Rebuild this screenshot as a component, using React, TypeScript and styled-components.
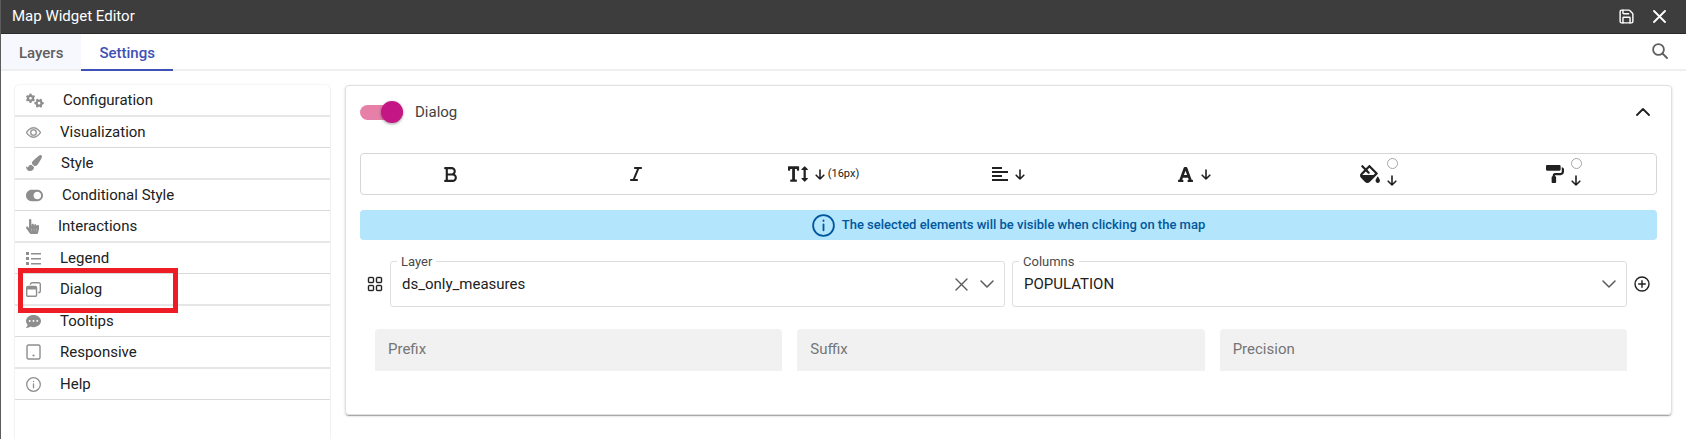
import React from 'react';
import styled, { createGlobalStyle } from 'styled-components';
import { FaPaintBrush, FaToggleOn, FaHandPointer, FaCommentDots, FaTextHeight, FaFont, FaFillDrip, FaPaintRoller } from 'react-icons/fa';
import { FaBold, FaGears, FaItalic, FaRegWindowRestore } from 'react-icons/fa6';
import { BsEye, BsGrid } from 'react-icons/bs';
import { LuSave } from 'react-icons/lu';

const GlobalStyle = createGlobalStyle`
  *, *::before, *::after { box-sizing: border-box; }
  body { margin: 0; background: #fff; color: #212121; font: 400 15px/20px Roboto, "Liberation Sans", sans-serif; }
  button, input, select { font: inherit; color: inherit; }
`;

const Page = styled.div`
  display: flex;
  flex-direction: column;
  min-height: 100vh;
  border-left: 1px solid #5c5c5c;
`;

const TitleBar = styled.header`
  display: flex;
  align-items: center;
  justify-content: space-between;
  height: 34px;
  padding: 0 20px 1px 11px;
  background: #3d3d3d;
  border-bottom: 1px solid #2b2b2b;
  color: #fff;
`;

const Title = styled.h1`
  margin: 0;
  font-size: 15px;
  font-weight: 400;
  line-height: 20px;
`;

const Actions = styled.div`
  display: flex;
  align-items: center;
  gap: 18px;
`;

const IconButton = styled.button`
  display: flex;
  flex: none;
  align-items: center;
  justify-content: center;
  padding: 0;
  border: 0;
  background: none;
  cursor: pointer;
`;

const TabBar = styled.nav`
  display: flex;
  align-items: stretch;
  height: 37px;
  padding-right: 18px;
  border-bottom: 2px solid #efefef;
`;

const Tab = styled.button<{ $active?: boolean }>`
  height: 37px;
  padding: 2px 18px 0;
  border: 0;
  border-bottom: 2px solid ${p => (p.$active ? '#3f51b5' : '#efefef')};
  background: ${p => (p.$active ? '#fff' : '#f7f8fd')};
  color: ${p => (p.$active ? '#3f51b5' : '#5f5f5f')};
  font-weight: 500;
  cursor: pointer;
`;

const SearchButton = styled(IconButton)`
  margin-left: auto;
  padding-bottom: 2px;
  color: #5f5f5f;
`;

const Body = styled.main`
  display: flex;
  flex: 1;
  align-items: stretch;
  gap: 14px;
  padding: 14px 14px 0 13px;
`;

const Sidebar = styled.ul`
  flex: none;
  width: 317px;
  margin: 0;
  padding: 0;
  list-style: none;
  border: solid #f2f2f2;
  border-width: 0 1px;
  border-radius: 5px 5px 0 0;
  box-shadow: 0 -1px 1px #f6f6f6;
`;

const SideItem = styled.li`
  position: relative;
  border-bottom: 2px solid #e6e6e6;
  &:nth-child(even) { border-bottom: 1px solid #d9d9d9; }
`;

const SideButton = styled.button`
  display: flex;
  align-items: center;
  gap: 19px;
  width: 100%;
  height: 30px;
  padding: 0 11px;
  border: 0;
  background: none;
  text-align: left;
  cursor: pointer;
  svg { flex: none; color: #8e8e8e; }
`;

const Highlight = styled.span`
  position: absolute;
  z-index: 1;
  top: -6px;
  left: 3px;
  width: 160px;
  height: 45px;
  border: 5px solid #ee1c25;
  pointer-events: none;
`;

const Card = styled.section`
  flex: 1;
  align-self: flex-start;
  min-width: 0;
  padding: 0 14px 43px;
  border: 1px solid #e0e0e0;
  border-radius: 4px;
  box-shadow: 0 2px 1px -1px rgba(0, 0, 0, 0.2), 0 1px 1px rgba(0, 0, 0, 0.14), 0 1px 3px rgba(0, 0, 0, 0.12);
`;

const CardHeader = styled.div`
  display: flex;
  align-items: center;
  justify-content: space-between;
  height: 52px;
  padding-right: 7px;
`;

const SwitchLabel = styled.label`
  display: flex;
  align-items: center;
  gap: 12px;
  color: #424242;
`;

const Switch = styled.input`
  appearance: none;
  position: relative;
  width: 43px;
  height: 15px;
  margin: 0;
  border-radius: 8px;
  background: #e680a8;
  &::after {
    content: '';
    position: absolute;
    top: -4px;
    right: 0;
    width: 22px;
    height: 22px;
    border-radius: 50%;
    background: #c51686;
    box-shadow: 0 1px 3px rgba(0, 0, 0, 0.4);
  }
`;

const Toolbar = styled.div`
  display: grid;
  grid-template-columns: repeat(7, 1fr);
  height: 42px;
  margin-top: 15px;
  border: 1px solid #d6d6d6;
  border-radius: 4px;
`;

const Tool = styled.button<{ $plain?: boolean }>`
  display: flex;
  align-items: center;
  justify-content: center;
  gap: 7px;
  padding: 0 ${p => (p.$plain ? 6 : 0)}px 0 0;
  border: 0;
  background: none;
  cursor: pointer;
`;

const ToolValue = styled.span`
  display: flex;
  align-items: center;
  gap: 3px;
  font-size: 11px;
`;

const ColorPick = styled.span`
  display: flex;
  flex-direction: column;
  align-items: center;
  gap: 6px;
  padding-bottom: 4px;
`;

const Swatch = styled.span`
  width: 11px;
  height: 11px;
  border: 1px solid #a6a6a6;
  border-radius: 50%;
`;

const Notice = styled.p`
  display: flex;
  align-items: center;
  justify-content: center;
  gap: 7px;
  height: 30px;
  margin: 15px 0 0;
  border-radius: 4px;
  background: #b3e5fc;
  color: #01579b;
  font-size: 13px;
  font-weight: 500;
`;

const SelectRow = styled.div`
  display: flex;
  align-items: center;
  gap: 7px;
  margin-top: 21px;
  padding: 0 7px;
`;

const Field = styled.div`
  position: relative;
  display: flex;
  flex: 1;
  align-items: center;
  min-width: 0;
  height: 46px;
  border: 1px solid #dedede;
  border-radius: 3px;
`;

const FieldLabel = styled.label`
  position: absolute;
  top: -9px;
  left: 6px;
  padding: 0 4px;
  background: #fff;
  color: #4a4a4a;
  font-size: 13px;
  line-height: 18px;
`;

const Select = styled.select`
  appearance: none;
  flex: 1;
  min-width: 0;
  height: 44px;
  padding: 0 11px 1px;
  border: 0;
  background: none;
`;

const FieldIcons = styled.div`
  display: flex;
  align-items: center;
  gap: 12px;
  padding-right: 10px;
  color: #5a5a5a;
  pointer-events: none;
  button { pointer-events: auto; }
`;

const InputRow = styled.div`
  display: grid;
  grid-template-columns: repeat(3, 1fr);
  gap: 15px;
  margin-top: 22px;
  padding: 0 30px 0 15px;
`;

const Input = styled.input`
  min-width: 0;
  width: 100%;
  height: 42px;
  padding: 0 13px 3px;
  border: 0;
  border-radius: 4px 4px 0 0;
  background: #f1f1f1;
  &::placeholder { color: #757575; opacity: 1; }
`;

type StrokeProps = { w: number; h: number; s?: number; children: React.ReactNode };
const Stroke = ({ w, h, s = 1.5, children }: StrokeProps) => (
  <svg width={w} height={h} viewBox={`0 0 ${w} ${h}`} fill="none" stroke="currentColor" strokeWidth={s} strokeLinecap="round" strokeLinejoin="round" aria-hidden="true">
    {children}
  </svg>
);

const ArrowDown = () => <Stroke w={10} h={11} s={1.6}><path d="M5 1v9M1.2 6.2L5 10l3.8-3.8" /></Stroke>;
const ChevronDown = () => <Stroke w={14} h={8}><path d="M1 1l6 6 6-6" /></Stroke>;
const ChevronUp = () => <Stroke w={14} h={8} s={1.8}><path d="M1 7l6-6 6 6" /></Stroke>;
const Cross = ({ s }: { s: number }) => <Stroke w={13} h={13} s={s}><path d="M1 1l11 11M12 1L1 12" /></Stroke>;
const Search = () => <Stroke w={16} h={16} s={1.8}><circle cx="6.5" cy="6.5" r="5.4" /><path d="M10.5 10.5l4.5 4.5" /></Stroke>;
const Plus = () => <Stroke w={16} h={16} s={1.4}><circle cx="8" cy="8" r="7" /><path d="M8 4.7v6.6M4.7 8h6.6" /></Stroke>;
const AlignLeft = () => (
  <svg width="16" height="16" viewBox="0 0 16 16" fill="currentColor" aria-hidden="true">
    <path d="M0 1h10v2H0zM0 5h16v2H0zM0 9h10v2H0zM0 13h16v2H0z" />
  </svg>
);
const ListIcon = () => (
  <svg width="15" height="13" viewBox="0 0 15 13" fill="currentColor" aria-hidden="true">
    <path d="M0 0h3v3H0zM0 5h3v3H0zM0 10h3v3H0zM5 1h10v1.5H5zM5 6h10v1.5H5zM5 11h10v1.5H5z" />
  </svg>
);
const Tablet = () => <Stroke w={15} h={16} s={1.4}><rect x="1" y="1" width="13" height="14" rx="1.5" /><circle cx="7.5" cy="11.5" r="1.1" fill="currentColor" stroke="none" /></Stroke>;
const HelpIcon = () => <Stroke w={15} h={15} s={1.3}><circle cx="7.5" cy="7.5" r="6.8" /><path d="M7.5 6.8v4M7.5 4.3v.2" /></Stroke>;
const NoticeIcon = () => <Stroke w={23} h={23} s={1.8}><circle cx="11.5" cy="11.5" r="10.4" /><path d="M11.5 10.3v6M11.5 6.5v.4" /></Stroke>;

const GearsIcon = styled(FaGears)`
  width: 18px;
  height: 15px;
`;

const HandIcon = styled(FaHandPointer)`
  width: 13px;
  height: 15px;
`;

const items: { label: string; icon: React.ReactNode; marked?: boolean }[] = [
  { label: 'Configuration', icon: <GearsIcon /> },
  { label: 'Visualization', icon: <BsEye size={15} strokeWidth={0.4} /> },
  { label: 'Style', icon: <FaPaintBrush size={16} /> },
  { label: 'Conditional Style', icon: <FaToggleOn size={17} /> },
  { label: 'Interactions', icon: <HandIcon /> },
  { label: 'Legend', icon: <ListIcon /> },
  { label: 'Dialog', icon: <FaRegWindowRestore size={15} />, marked: true },
  { label: 'Tooltips', icon: <FaCommentDots size={15} /> },
  { label: 'Responsive', icon: <Tablet /> },
  { label: 'Help', icon: <HelpIcon /> },
];

export default function App() {
  return (
    <>
      <GlobalStyle />
      <Page>
        <TitleBar>
          <Title>Map Widget Editor</Title>
          <Actions>
            <IconButton aria-label="Save"><LuSave size={17} /></IconButton>
            <IconButton aria-label="Close"><Cross s={1.8} /></IconButton>
          </Actions>
        </TitleBar>
        <TabBar>
          <Tab>Layers</Tab>
          <Tab $active>Settings</Tab>
          <SearchButton aria-label="Search"><Search /></SearchButton>
        </TabBar>
        <Body>
          <Sidebar>
            {items.map(item => (
              <SideItem key={item.label}>
                <SideButton>{item.icon}{item.label}</SideButton>
                {item.marked && <Highlight />}
              </SideItem>
            ))}
          </Sidebar>
          <Card>
            <CardHeader>
              <SwitchLabel><Switch type="checkbox" role="switch" defaultChecked />Dialog</SwitchLabel>
              <IconButton aria-label="Collapse"><ChevronUp /></IconButton>
            </CardHeader>
            <Toolbar>
              <Tool $plain aria-label="Bold"><FaBold size={17} /></Tool>
              <Tool $plain aria-label="Italic"><FaItalic size={16} /></Tool>
              <Tool aria-label="Font size"><FaTextHeight size={20} /><ToolValue><ArrowDown />(16px)</ToolValue></Tool>
              <Tool aria-label="Alignment"><AlignLeft /><ArrowDown /></Tool>
              <Tool aria-label="Font"><FaFont size={17} /><ArrowDown /></Tool>
              <Tool aria-label="Background colour"><FaFillDrip size={20} /><ColorPick><Swatch /><ArrowDown /></ColorPick></Tool>
              <Tool aria-label="Text colour"><FaPaintRoller size={18} /><ColorPick><Swatch /><ArrowDown /></ColorPick></Tool>
            </Toolbar>
            <Notice><NoticeIcon />The selected elements will be visible when clicking on the map</Notice>
            <SelectRow>
              <IconButton aria-label="Reorder"><BsGrid size={16} strokeWidth={0.4} /></IconButton>
              <Field>
                <FieldLabel htmlFor="layer">Layer</FieldLabel>
                <Select id="layer"><option>ds_only_measures</option></Select>
                <FieldIcons><IconButton aria-label="Clear"><Cross s={1.4} /></IconButton><ChevronDown /></FieldIcons>
              </Field>
              <Field>
                <FieldLabel htmlFor="columns">Columns</FieldLabel>
                <Select id="columns"><option>POPULATION</option></Select>
                <FieldIcons><ChevronDown /></FieldIcons>
              </Field>
              <IconButton aria-label="Add"><Plus /></IconButton>
            </SelectRow>
            <InputRow>
              <Input aria-label="Prefix" placeholder="Prefix" />
              <Input aria-label="Suffix" placeholder="Suffix" />
              <Input aria-label="Precision" placeholder="Precision" />
            </InputRow>
          </Card>
        </Body>
      </Page>
    </>
  );
}
